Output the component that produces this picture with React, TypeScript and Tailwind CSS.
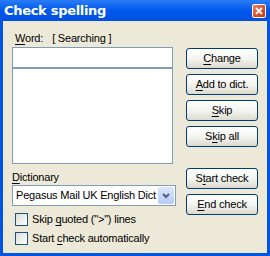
import React from "react";

function U({ children }: { children: React.ReactNode }) {
  return <span className="underline underline-offset-2">{children}</span>;
}

function XpButton({ children }: { children: React.ReactNode }) {
  return (
    <button className="h-[21px] w-[72px] rounded-[3px] border border-[#003c74] bg-gradient-to-b from-[#ffffff] via-[#f4f4f0] to-[#dcdad0] text-[11px] leading-none tracking-[-0.2px] text-black">
      {children}
    </button>
  );
}

function CheckRow({ children }: { children: React.ReactNode }) {
  return (
    <div className="flex items-center gap-[4px]">
      <div className="h-[13px] w-[13px] border border-[#1c5180] bg-gradient-to-br from-[#dcdcd7] to-[#ffffff]" />
      <span className="text-[11px] leading-none">{children}</span>
    </div>
  );
}

export default function App() {
  return (
    <div
      className="flex h-[256px] w-[270px] flex-col bg-[#0054e3] tracking-[-0.2px]"
      style={{ fontFamily: "'Liberation Sans', Arial, sans-serif" }}
    >
      <div className="flex h-[21px] items-center justify-between bg-gradient-to-b from-[#2a7cf5] via-[#0058ee] to-[#0350de] pl-[4px] pr-[4px]">
        <span
          className="text-[13px] font-bold text-white"
          style={{ fontFamily: "'DejaVu Sans', sans-serif", letterSpacing: "-0.3px" }}
        >
          Check spelling
        </span>
        <div className="flex h-[14px] w-[14px] items-center justify-center rounded-[2px] border border-white bg-gradient-to-br from-[#e8876a] via-[#d9532e] to-[#c23a14]">
          <svg width="8" height="8" viewBox="0 0 8 8">
            <path d="M1 1 L7 7 M7 1 L1 7" stroke="white" strokeWidth="1.8" />
          </svg>
        </div>
      </div>
      <div className="mx-[3px] mb-[3px] flex flex-1 bg-[#ece9d8] text-black">
        <div className="ml-[9px] flex w-[164px] flex-col">
          <div className="mt-[11px] flex h-[12px] items-center text-[11px] leading-none">
            <span className="ml-[3px]">
              <U>W</U>ord:
            </span>
            <span className="ml-[9px]">[ Searching ]</span>
          </div>
          <div className="mt-[3px] h-[21px] w-[161px] border border-[#7f9db9] bg-white" />
          <div className="h-[96px] w-[161px] border border-[#7f9db9] bg-white" />
          <div className="mt-[8px] h-[12px] text-[11px] leading-none">
            <U>D</U>ictionary
          </div>
          <div className="mt-[1px] flex h-[21px] w-[164px] items-center border border-[#7f9db9] bg-white">
            <span className="flex-1 overflow-hidden whitespace-nowrap pl-[3px] text-[11px] leading-none">
              Pegasus Mail UK English Dict
            </span>
            <div className="mr-[1px] flex h-[17px] w-[16px] items-center justify-center rounded-[2px] bg-gradient-to-b from-[#dce6fd] to-[#b6cbf8]">
              <svg width="8" height="6" viewBox="0 0 8 6">
                <path d="M1 1 L4 4 L7 1" stroke="#4d6185" strokeWidth="2" fill="none" />
              </svg>
            </div>
          </div>
          <div className="mt-[7px] flex flex-col gap-[6px] pl-[3px]">
            <CheckRow>
              Skip <U>q</U>uoted ("&gt;") lines
            </CheckRow>
            <CheckRow>
              Start <U>c</U>heck automatically
            </CheckRow>
          </div>
        </div>
        <div className="ml-[10px] flex flex-col">
          <div className="mt-[27px] flex flex-col gap-[5px]">
            <XpButton>
              <U>C</U>hange
            </XpButton>
            <XpButton>
              <U>A</U>dd to dict.
            </XpButton>
            <XpButton>
              <U>S</U>kip
            </XpButton>
            <XpButton>
              S<U>k</U>ip all
            </XpButton>
          </div>
          <div className="mt-[21px] flex flex-col gap-[5px]">
            <XpButton>
              S<U>t</U>art check
            </XpButton>
            <XpButton>
              <U>E</U>nd check
            </XpButton>
          </div>
        </div>
      </div>
    </div>
  );
}
